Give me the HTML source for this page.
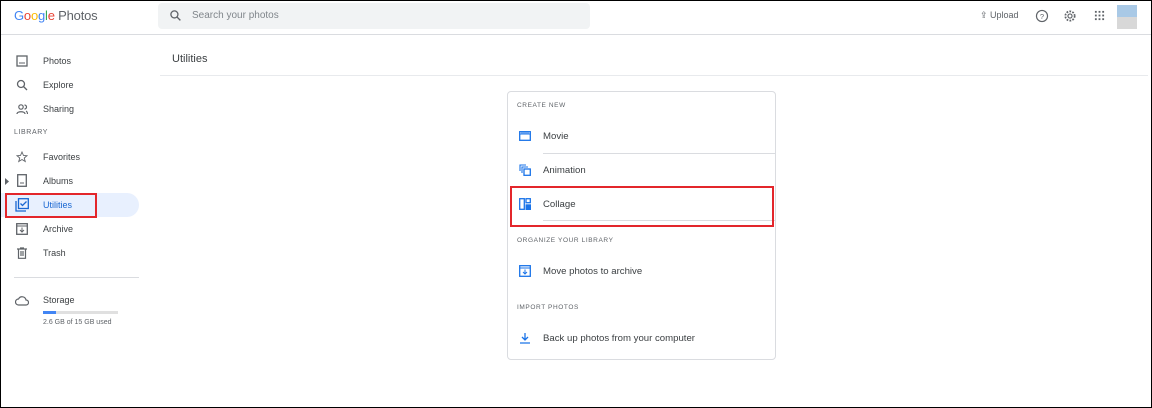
<!DOCTYPE html><html><head><style>
*{box-sizing:border-box;margin:0;padding:0}
body{width:1152px;height:408px;overflow:hidden;background:#fff;font-family:"Liberation Sans",Arial,sans-serif;color:#3c4043;position:relative}
.frame{position:absolute;left:0;top:0;width:1152px;height:408px;border:1px solid #000;pointer-events:none;z-index:9}
.a{position:absolute}
.t{font-size:9px;color:#3c4043}
.c{font-size:9.6px;color:#3c4043}
.lab{font-size:7px;letter-spacing:.6px;color:#5f6368}
svg{position:absolute}
</style></head><body>
<div class="frame"></div>
<div class="a" style="left:14px;top:8px;font-size:13px;letter-spacing:-.2px"><span style="color:#4285f4">G</span><span style="color:#ea4335">o</span><span style="color:#fbbc05">o</span><span style="color:#4285f4">g</span><span style="color:#34a853">l</span><span style="color:#ea4335">e</span> <span style="color:#5f6368">Photos</span></div>
<div class="a" style="left:158px;top:3px;width:432px;height:26px;background:#f1f3f4;border-radius:4px"></div>
<svg style="left:169px;top:9px" width="13" height="13" viewBox="0 0 24 24"><circle cx="10" cy="10" r="6.5" fill="none" stroke="#5f6368" stroke-width="2.4"/><path d="M15 15l6 6" stroke="#5f6368" stroke-width="2.4"/></svg>
<div class="a" style="left:192px;top:10px;font-size:10px;color:#80868b">Search your photos</div>
<div class="a" style="left:980px;top:10px;font-size:9px;color:#5f6368">⇪ Upload</div>
<svg style="left:1035px;top:9px" width="14" height="14" viewBox="0 0 24 24"><circle cx="12" cy="12" r="9.5" fill="none" stroke="#5f6368" stroke-width="2"/><text x="12" y="17" font-size="13" text-anchor="middle" fill="#5f6368" font-family="Liberation Sans">?</text></svg>
<svg style="left:1063px;top:9px" width="14" height="14" viewBox="0 0 24 24"><circle cx="12" cy="12" r="8" fill="none" stroke="#5f6368" stroke-width="3" stroke-dasharray="3 2.2"/><circle cx="12" cy="12" r="3.5" fill="none" stroke="#5f6368" stroke-width="2"/></svg>
<svg style="left:1094px;top:10px" width="11" height="11" viewBox="0 0 12 12" fill="#5f6368"><rect x="1" y="1" width="2" height="2"/><rect x="5" y="1" width="2" height="2"/><rect x="9" y="1" width="2" height="2"/><rect x="1" y="5" width="2" height="2"/><rect x="5" y="5" width="2" height="2"/><rect x="9" y="5" width="2" height="2"/><rect x="1" y="9" width="2" height="2"/><rect x="5" y="9" width="2" height="2"/><rect x="9" y="9" width="2" height="2"/></svg>
<div class="a" style="left:1117px;top:5px;width:20px;height:24px;background:linear-gradient(#a9c9e6 50%,#d8d8d8 50%)"></div>
<div class="a" style="left:0;top:34px;width:1152px;height:1px;background:#dadce0"></div>
<div class="a" style="left:0;top:193px;width:139px;height:24px;background:#e8f0fe;border-radius:0 12px 12px 0"></div>
<div class="a" style="left:5px;top:193px;width:92px;height:25px;border:2px solid #e3262b"></div>
<div class="a t" style="left:43px;top:56px">Photos</div>
<div class="a t" style="left:43px;top:80px">Explore</div>
<div class="a t" style="left:43px;top:104px">Sharing</div>
<div class="a lab" style="left:14px;top:129px">LIBRARY</div>
<div class="a t" style="left:43px;top:152px">Favorites</div>
<div class="a t" style="left:43px;top:176px">Albums</div>
<div class="a t" style="left:43px;top:200px;color:#1967d2">Utilities</div>
<div class="a t" style="left:43px;top:224px">Archive</div>
<div class="a t" style="left:43px;top:248px">Trash</div>
<svg style="left:16px;top:55px" width="12" height="12" viewBox="0 0 12 12"><rect x="1" y="1" width="10" height="10" fill="none" stroke="#5f6368" stroke-width="1.3"/><path d="M3 8h6" stroke="#5f6368"/></svg>
<svg style="left:16px;top:79px" width="12" height="12" viewBox="0 0 12 12"><circle cx="5" cy="5" r="3.5" fill="none" stroke="#5f6368" stroke-width="1.3"/><path d="M7.5 7.5l3.5 3.5" stroke="#5f6368" stroke-width="1.3"/></svg>
<svg style="left:16px;top:103px" width="12" height="12" viewBox="0 0 12 12"><circle cx="5" cy="4" r="2.2" fill="none" stroke="#5f6368" stroke-width="1.2"/><path d="M1 11c0-3 8-3 8 0M8.5 2a2 2 0 010 4M10 8c1 .5 1.5 1.5 1.5 3" fill="none" stroke="#5f6368" stroke-width="1.2"/></svg>
<svg style="left:16px;top:151px" width="12" height="12" viewBox="0 0 24 24"><path d="M12 2l3 7 7 .5-5.5 4.5 2 7L12 17l-6.5 4 2-7L2 9.5 9 9z" fill="none" stroke="#5f6368" stroke-width="1.8"/></svg>
<svg style="left:5px;top:178px" width="5" height="7" viewBox="0 0 5 7"><path d="M0 0l4 3.5L0 7z" fill="#5f6368"/></svg>
<svg style="left:17px;top:174px" width="10" height="13" viewBox="0 0 10 13"><rect x=".7" y=".7" width="8.6" height="11.6" fill="none" stroke="#5f6368" stroke-width="1.3"/><path d="M3 9h4" stroke="#5f6368"/></svg>
<svg style="left:15px;top:198px" width="14" height="14" viewBox="0 0 14 14"><path d="M1 3v10h10" fill="none" stroke="#1967d2" stroke-width="1.3"/><rect x="3.5" y=".7" width="9.8" height="9.8" fill="none" stroke="#1967d2" stroke-width="1.3"/><path d="M5.5 5.5l2 2 4-4" fill="none" stroke="#1967d2" stroke-width="1.3"/></svg>
<svg style="left:16px;top:223px" width="12" height="12" viewBox="0 0 12 12"><rect x=".7" y=".7" width="10.6" height="10.6" fill="none" stroke="#5f6368" stroke-width="1.3"/><path d="M1 3h10M6 4.5v4.5M4 7l2 2 2-2" fill="none" stroke="#5f6368"/></svg>
<svg style="left:17px;top:247px" width="10" height="12" viewBox="0 0 10 12"><path d="M0 2h10M3 1h4M1.5 2v9.3h7V2M4 4v5M6 4v5" fill="none" stroke="#5f6368" stroke-width="1.2"/></svg>
<div class="a" style="left:14px;top:277px;width:125px;height:1px;background:#dadce0"></div>
<svg style="left:15px;top:296px" width="14" height="10" viewBox="0 0 14 10"><path d="M3.5 9h7.5a2.5 2.5 0 000-5 4 4 0 00-7.5-1A3 3 0 003.5 9z" fill="none" stroke="#5f6368" stroke-width="1.2"/></svg>
<div class="a t" style="left:43px;top:295px">Storage</div>
<div class="a" style="left:43px;top:311px;width:75px;height:3px;background:#e0e0e0"><div style="width:13px;height:3px;background:#4285f4"></div></div>
<div class="a" style="left:43px;top:319px;font-size:7px;color:#5f6368">2.6 GB of 15 GB used</div>
<div class="a" style="left:172px;top:53px;font-size:11px;color:#3c4043">Utilities</div>
<div class="a" style="left:160px;top:75px;width:988px;height:1px;background:#e8eaed"></div>
<div class="a" style="left:507px;top:91px;width:269px;height:269px;border:1px solid #dadce0;border-radius:4px"></div>
<div class="a lab" style="left:517px;top:102px;font-size:6.5px">CREATE NEW</div>
<div class="a c" style="left:543px;top:131px">Movie</div>
<div class="a" style="left:543px;top:153px;width:232px;height:1px;background:#dadce0"></div>
<div class="a c" style="left:543px;top:165px">Animation</div>
<div class="a c" style="left:543px;top:199px">Collage</div>
<div class="a" style="left:543px;top:220px;width:232px;height:1px;background:#dadce0"></div>
<div class="a" style="left:510px;top:186px;width:264px;height:41px;border:2px solid #e3262b"></div>
<div class="a lab" style="left:517px;top:237px;font-size:6.5px">ORGANIZE YOUR LIBRARY</div>
<div class="a c" style="left:543px;top:266px">Move photos to archive</div>
<div class="a lab" style="left:517px;top:304px;font-size:6.5px">IMPORT PHOTOS</div>
<div class="a c" style="left:543px;top:333px">Back up photos from your computer</div>
<svg style="left:519px;top:131px" width="12" height="10" viewBox="0 0 12 10"><rect x=".7" y=".7" width="10.6" height="8.6" fill="none" stroke="#1a73e8" stroke-width="1.3"/><path d="M1 3h10M3 1v2M5 1v2M7 1v2M9 1v2" stroke="#1a73e8"/></svg>
<svg style="left:519px;top:164px" width="12" height="12" viewBox="0 0 12 12"><path d="M1 7V1h6M3 9V3h6" fill="none" stroke="#1a73e8" stroke-width="1.1"/><rect x="5" y="5" width="6.3" height="6.3" fill="none" stroke="#1a73e8" stroke-width="1.3"/></svg>
<svg style="left:519px;top:198px" width="12" height="12" viewBox="0 0 12 12"><rect x=".7" y=".7" width="4.6" height="10.6" fill="none" stroke="#1a73e8" stroke-width="1.3"/><rect x="7" y=".7" width="4.3" height="4" fill="none" stroke="#1a73e8" stroke-width="1.3"/><rect x="6.5" y="6.3" width="5.5" height="5.7" fill="#1a73e8"/></svg>
<svg style="left:519px;top:265px" width="12" height="12" viewBox="0 0 12 12"><rect x=".7" y=".7" width="10.6" height="10.6" fill="none" stroke="#1a73e8" stroke-width="1.3"/><path d="M1 3h10M6 4.5v4.5M4 7l2 2 2-2" fill="none" stroke="#1a73e8"/></svg>
<svg style="left:519px;top:332px" width="12" height="12" viewBox="0 0 12 12"><path d="M6 1v7M3 5l3 3 3-3M1 11h10" fill="none" stroke="#1a73e8" stroke-width="1.3"/></svg>
</body></html>
